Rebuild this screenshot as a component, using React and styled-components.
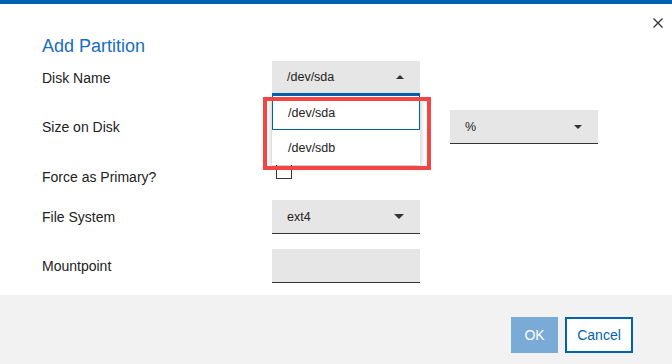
import React from "react";
import styled, { createGlobalStyle } from "styled-components";

const GlobalStyle = createGlobalStyle`
  html, body {
    margin: 0;
    padding: 0;
    background: #ffffff;
  }
  body {
    font-family: "Liberation Sans", Arial, sans-serif;
    color: #222222;
  }
  * {
    box-sizing: border-box;
  }
`;

const Dialog = styled.div`
  width: 672px;
  height: 364px;
  border-top: 4px solid #0063b1;
  display: flex;
  flex-direction: column;
  background: #ffffff;
`;

const TopRow = styled.div`
  height: 32px;
  display: flex;
  justify-content: flex-end;
  align-items: flex-start;
  padding: 14px 9px 0 0;
`;

const CloseButton = styled.button`
  width: 10px;
  height: 10px;
  padding: 0;
  border: none;
  background: transparent;
  display: flex;
  cursor: pointer;
`;

const Body = styled.div`
  padding: 0 42px;
`;

const Title = styled.h2`
  margin: 0;
  font-size: 18px;
  line-height: 20px;
  font-weight: normal;
  color: #1a6cc4;
`;

const Form = styled.div`
  margin-top: 5px;
  display: flex;
  flex-direction: column;
  gap: 15px;
`;

const Row = styled.div`
  display: flex;
  align-items: ${({ $top }) => ($top ? "flex-start" : "center")};
  min-height: ${({ $short }) => ($short ? "24px" : "34px")};
`;

const Label = styled.label`
  width: 230px;
  flex-shrink: 0;
  font-size: 14px;
  line-height: 16px;
  color: #222222;
  margin-top: ${({ $offset }) => $offset || 0}px;
`;

const Field = styled.div`
  position: relative;
  display: flex;
  gap: 30px;
`;

const Select = styled.div`
  width: 148px;
  height: 34px;
  background: #e6e6e6;
  border-bottom: ${({ $focused }) => ($focused ? "2px solid #0063b1" : "1px solid #333333")};
  display: flex;
  align-items: center;
  justify-content: space-between;
  padding: 0 15px 0 15px;
  font-size: 12.5px;
  color: #222222;
`;

const Input = styled.div`
  width: 148px;
  height: 34px;
  background: #e6e6e6;
  border-bottom: 1px solid #333333;
`;

const Arrow = styled.span`
  width: 0;
  height: 0;
  border-left: ${({ $small }) => ($small ? 4 : 5)}px solid transparent;
  border-right: ${({ $small }) => ($small ? 4 : 5)}px solid transparent;
  ${({ $up, $small }) =>
    $up
      ? `border-bottom: ${$small ? 4 : 5}px solid #333333;`
      : `border-top: ${$small ? 4 : 5}px solid #333333;`}
  margin-right: 1px;
`;

const Menu = styled.ul`
  position: absolute;
  top: 34px;
  left: 0;
  width: 148px;
  margin: 0;
  padding: 0;
  list-style: none;
  background: #ffffff;
  box-shadow: 0 2px 6px rgba(0, 0, 0, 0.28);
  z-index: 2;
`;

const Option = styled.li`
  height: 35px;
  display: flex;
  align-items: center;
  padding-left: 15px;
  font-size: 12.5px;
  color: #222222;
  border: 1px solid ${({ $active }) => ($active ? "#0063b1" : "transparent")};
`;

const Highlight = styled.div`
  position: absolute;
  left: -9px;
  top: 36px;
  width: 168px;
  height: 73px;
  border: 4px solid #f44545;
  z-index: 3;
  pointer-events: none;
`;

const Checkbox = styled.span`
  display: block;
  width: 16px;
  height: 16px;
  margin: 4px 0 0 4px;
  border: 1px solid #333333;
  background: #ffffff;
`;

const Footer = styled.div`
  margin-top: auto;
  height: 69px;
  background: #f2f2f2;
  display: flex;
  justify-content: flex-end;
  align-items: flex-start;
  gap: 7px;
  padding: 22px 39px 0 0;
`;

const Button = styled.button`
  height: 36px;
  padding: 0;
  font-family: "Liberation Sans", Arial, sans-serif;
  font-size: 14px;
  width: ${({ $width }) => $width}px;
  background: ${({ $primary }) => ($primary ? "#7aaad6" : "#ffffff")};
  color: ${({ $primary }) => ($primary ? "#ffffff" : "#0063b1")};
  border: ${({ $primary }) => ($primary ? "none" : "2px solid #0063b1")};
  cursor: pointer;
`;

const CloseIcon = () => (
  <svg width="10" height="10" viewBox="0 0 10 10">
    <path d="M0.5 0.5 L9.5 9.5 M9.5 0.5 L0.5 9.5" stroke="#333333" strokeWidth="1.3" />
  </svg>
);

export default function App() {
  return (
    <>
      <GlobalStyle />
      <Dialog>
        <TopRow>
          <CloseButton aria-label="Close">
            <CloseIcon />
          </CloseButton>
        </TopRow>
        <Body>
          <Title>Add Partition</Title>
          <Form>
            <Row>
              <Label>Disk Name</Label>
              <Field>
                <Select $focused>
                  <span>/dev/sda</span>
                  <Arrow $up $small />
                </Select>
                <Menu>
                  <Option $active>/dev/sda</Option>
                  <Option>/dev/sdb</Option>
                </Menu>
                <Highlight />
              </Field>
            </Row>
            <Row>
              <Label>Size on Disk</Label>
              <Field>
                <Input />
                <Select>
                  <span>%</span>
                  <Arrow $small />
                </Select>
              </Field>
            </Row>
            <Row $top $short>
              <Label $offset={10}>Force as Primary?</Label>
              <Checkbox />
            </Row>
            <Row>
              <Label>File System</Label>
              <Select>
                <span>ext4</span>
                <Arrow />
              </Select>
            </Row>
            <Row>
              <Label>Mountpoint</Label>
              <Input />
            </Row>
          </Form>
        </Body>
        <Footer>
          <Button $primary $width={47}>OK</Button>
          <Button $width={68}>Cancel</Button>
        </Footer>
      </Dialog>
    </>
  );
}
